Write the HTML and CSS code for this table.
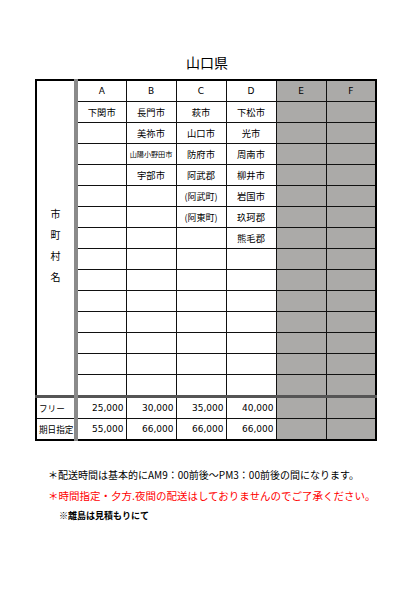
FILE: index.html
```html
<!DOCTYPE html>
<html lang="ja">
<head>
<meta charset="utf-8">
<link rel="stylesheet" href="styles.css">
</head>
<body>
<div class="page">
  <h1 class="title">山口県</h1>
  <table class="grid">
    <colgroup>
      <col class="c-label"><col class="c"><col class="c"><col class="c"><col class="c"><col class="c"><col class="c">
    </colgroup>
    <tr class="head">
      <td class="label" rowspan="15"><span class="vert">市<br>町<br>村<br>名</span></td>
      <th>A</th><th>B</th><th>C</th><th>D</th><th class="g">E</th><th class="g">F</th>
    </tr>
    <tr><td>下関市</td><td>長門市</td><td>萩市</td><td>下松市</td><td class="g"></td><td class="g"></td></tr>
    <tr><td></td><td>美祢市</td><td>山口市</td><td>光市</td><td class="g"></td><td class="g"></td></tr>
    <tr><td></td><td class="tiny">山陽小野田市</td><td>防府市</td><td>周南市</td><td class="g"></td><td class="g"></td></tr>
    <tr><td></td><td>宇部市</td><td>阿武郡</td><td>柳井市</td><td class="g"></td><td class="g"></td></tr>
    <tr><td></td><td></td><td class="sm">(阿武町)</td><td>岩国市</td><td class="g"></td><td class="g"></td></tr>
    <tr><td></td><td></td><td class="sm">(阿東町)</td><td>玖珂郡</td><td class="g"></td><td class="g"></td></tr>
    <tr><td></td><td></td><td></td><td>熊毛郡</td><td class="g"></td><td class="g"></td></tr>
    <tr><td></td><td></td><td></td><td></td><td class="g"></td><td class="g"></td></tr>
    <tr><td></td><td></td><td></td><td></td><td class="g"></td><td class="g"></td></tr>
    <tr><td></td><td></td><td></td><td></td><td class="g"></td><td class="g"></td></tr>
    <tr><td></td><td></td><td></td><td></td><td class="g"></td><td class="g"></td></tr>
    <tr><td></td><td></td><td></td><td></td><td class="g"></td><td class="g"></td></tr>
    <tr><td></td><td></td><td></td><td></td><td class="g"></td><td class="g"></td></tr>
    <tr><td></td><td></td><td></td><td></td><td class="g"></td><td class="g"></td></tr>
    <tr class="price first">
      <td class="plabel">フリー</td><td class="num">25,000</td><td class="num">30,000</td><td class="num">35,000</td><td class="num">40,000</td><td class="g"></td><td class="g"></td>
    </tr>
    <tr class="price">
      <td class="plabel">期日指定</td><td class="num">55,000</td><td class="num">66,000</td><td class="num">66,000</td><td class="num">66,000</td><td class="g"></td><td class="g"></td>
    </tr>
  </table>
  <div class="notes">
    <p class="note">＊配送時間は基本的にAM9：00前後〜PM3：00前後の間になります。</p>
    <p class="note red">＊時間指定・夕方.夜間の配送はしておりませんのでご了承ください。</p>
    <p class="note bold">※離島は見積もりにて</p>
  </div>
</div>
</body>
</html>
```
FILE: styles.css
```css
html, body {
  margin: 0;
  padding: 0;
  background: #fff;
}
body {
  font-family: "DejaVu Sans", "Noto Sans CJK JP", sans-serif;
  color: #000;
}
.page {
  width: 419px;
}
.title {
  margin: 0;
  padding-top: 52px;
  height: 24px;
  line-height: 20px;
  font-size: 14px;
  font-weight: normal;
  text-align: center;
  font-family: "Noto Sans CJK JP", sans-serif;
  padding-right: 5px;
}
.grid {
  margin: 3px 0 0 35px;
  border-collapse: collapse;
  table-layout: fixed;
  width: 342px;
  border: 2px solid #000;
}
.c-label { width: 40px; }
.c { width: 50px; }
.grid th,
.grid td {
  border: 1px solid #111;
  height: 20px;
  padding: 0;
  text-align: center;
  vertical-align: middle;
  font-size: 9.3px;
  font-weight: normal;
  font-family: "Noto Sans CJK JP", sans-serif;
  white-space: nowrap;
  overflow: hidden;
}
.grid th {
  font-family: "DejaVu Sans", sans-serif;
  font-size: 9px;
}
.grid .label {
  border-right: 4px solid #8a8a8a;
  vertical-align: middle;
  padding-top: 13px;
}
.vert {
  display: inline-block;
  font-size: 10px;
  line-height: 21px;
}
.grid .g {
  background: #abaaa8;
}
.grid .tiny {
  font-size: 7.2px;
  letter-spacing: -0.1px;
}
.grid .sm {
  font-size: 9px;
}
.grid .price td {
  height: 20px;
}
.grid .price.first td {
  border-top: 3px solid #555;
}
.grid .plabel {
  text-align: left;
  padding-left: 2px;
  font-size: 8.6px;
  border-right: 4px solid #8a8a8a;
}
.grid .num {
  text-align: right;
  padding-right: 2px;
  font-family: "DejaVu Sans", sans-serif;
  font-size: 9px;
}
.notes {
  margin-top: 23px;
  padding-left: 48px;
}
.note {
  margin: 0;
  font-family: "Noto Sans CJK JP", sans-serif;
  font-size: 10px;
  line-height: 21px;
  white-space: nowrap;
}
.note.red {
  color: #ff0000;
  font-size: 10.5px;
}
.note.bold {
  font-weight: bold;
  font-size: 9px;
  padding-left: 11px;
  line-height: 19px;
}
```
